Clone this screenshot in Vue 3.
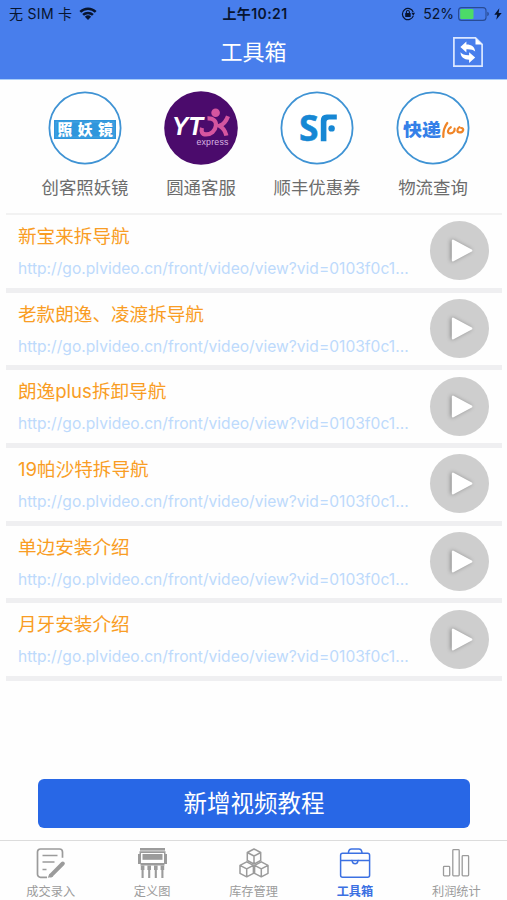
<template>
  <div class="page">
    <header class="header">
      <div class="status">
        <div class="status-left">
          <span>无 SIM 卡</span>
          <svg class="wifi" width="18" height="13" viewBox="0 0 18 13">
            <g fill="none" stroke="#07142f" stroke-width="2.5">
              <path d="M1.3 4.8a11 11 0 0 1 15.4 0" />
              <path d="M4.1 7.9a7 7 0 0 1 9.8 0" />
            </g>
            <path d="M5.9 9.8a4.5 4.5 0 0 1 6.2 0L9 12.9z" fill="#07142f" />
          </svg>
        </div>
        <div class="status-time">上午10:21</div>
        <div class="status-right">
          <svg class="lock" width="14" height="14" viewBox="0 0 14 14">
            <path d="M12.2 5a5.6 5.6 0 1 0 .1 3.9" fill="none" stroke="#07142f" stroke-width="1.2" />
            <path d="M10.4 5.8H14l-1.7 2.9z" fill="#07142f" />
            <rect x="4.2" y="6.1" width="5.5" height="4" rx=".5" fill="#07142f" />
            <path d="M5.4 6.3V5a1.5 1.5 0 0 1 3 0v1.3" fill="none" stroke="#07142f" stroke-width="1.1" />
          </svg>
          <span class="percent">52%</span>
          <svg class="battery" width="31" height="14" viewBox="0 0 31 14">
            <rect x=".6" y=".6" width="27.4" height="12.8" rx="3" fill="none" stroke="#284b94" stroke-width="1.1" />
            <rect x="2.2" y="2.1" width="13.3" height="9.8" rx="1.2" fill="#4cdb68" />
            <path d="M29.3 4.8q1.6.6 1.6 2.2t-1.6 2.2z" fill="#284b94" />
          </svg>
          <svg class="bolt" width="8" height="12" viewBox="0 0 8 12">
            <path d="M5.3.3.3 6.8h2.9l-.9 5 5.4-6.8H4.6z" fill="#07142f" />
          </svg>
        </div>
      </div>
      <div class="navbar">
        <h1>工具箱</h1>
        <svg class="refresh" width="30" height="30" viewBox="0 0 30 30">
          <path d="M.9.9h21.6L29.1 7.4v21.7H.9z" fill="none" stroke="#dce8ff" stroke-width="1.7" />
          <path d="M22.5 1.2v6.3h6.3z" fill="#fff" />
          <path d="M7.4 10.1 13.4 4.4v3.2c5.3 0 8.4 2.5 8.8 7-2-2-4.5-2.6-8.8-2.4v3.4z" fill="#fff" />
          <path d="M22.2 20.4l-6.1-5.2v3c-4.4.1-7-.8-8.6-2.9.2 4.8 3.4 7.4 8.6 7.4v3.2z" fill="#fff" />
        </svg>
      </div>
    </header>

    <section class="tools">
      <div v-for="tool in tools" :key="tool.id" class="tool">
        <svg class="logo" width="74" height="74" viewBox="0 0 74 74">
          <circle v-if="tool.id === 'yto'" cx="37" cy="37" r="36.8" fill="#4b0b6c" />
          <circle v-else cx="37" cy="37" r="35.6" fill="#fff" stroke="#3f93d4" stroke-width="1.8" />

          <g v-if="tool.id === 'mirror'">
            <rect x="6" y="29" width="62" height="19" fill="#3096dc" />
            <rect x="8" y="31" width="58" height="15" fill="none" stroke="#55afe8" stroke-width=".6" />
            <text class="cjk" x="9.4" y="43.7" font-size="14.8" font-weight="900" fill="#fff" textLength="55.5">照妖镜</text>
          </g>
          <g v-else-if="tool.id === 'yto'">
            <text class="arial" x="8" y="44" font-size="25" font-weight="700" font-style="italic" fill="#fff" textLength="31" lengthAdjust="spacingAndGlyphs">YT</text>
            <g fill="none" stroke="#d5559f" stroke-width="4.2">
              <path d="M43.5 27.4c6-.3 9 2.6 8.4 7.4-.7 5.2-4.9 8.6-9.9 8.6-3.8 0-5.2-2.6-4-6.6" />
              <path d="M64 25.2c-1.8 5-4.2 8-8.4 9.6 3 1.6 5.6 4.6 6.8 9.8" />
            </g>
            <circle cx="51.6" cy="21.8" r="4.3" fill="#d5559f" />
            <text class="arial" x="32.4" y="54.4" font-size="8.8" fill="#d9b5e2" textLength="32">express</text>
          </g>
          <g v-else-if="tool.id === 'sf'">
            <text class="latin" x="19" y="49.8" font-size="36" font-weight="700" fill="#1687d4" stroke="#1687d4" stroke-width=".5" textLength="19.5" lengthAdjust="spacingAndGlyphs">S</text>
            <path d="M40.8 50.2V29.4q0-6 6-6h10v5.2h-7.4q-3 0-3 2.8v18.8z" fill="#1687d4" />
            <circle cx="51.6" cy="37.4" r="3.2" fill="#1687d4" />
          </g>
          <g v-else>
            <text class="cjk" x="7" y="45.4" font-size="17.5" font-weight="900" fill="#3580e8" textLength="38" lengthAdjust="spacingAndGlyphs">快递</text>
            <g fill="none" stroke="#f08527" stroke-width="2.2" stroke-linecap="round">
              <path d="M51.3 32c-3 3.8-4.2 8-4 14" />
              <path d="M54.8 36.2c-3.6 2-3.8 6.2-.6 6.2 3 0 4.8-2.4 4.4-4.8" />
              <path d="M63.4 36.2c-2.6 1.8-2.8 5.2.2 5.2 3.6 0 5.2-4.2 1.6-4.4" />
            </g>
          </g>
        </svg>
        <span class="tool-name">{{ tool.name }}</span>
      </div>
    </section>

    <ul class="videos">
      <li v-for="title in videos" :key="title" class="video">
        <div class="video-text">
          <div class="video-title">{{ title }}</div>
          <div class="video-url">{{ url }}</div>
        </div>
        <button class="play" type="button">
          <svg width="59" height="59" viewBox="0 0 59 59">
            <path d="M23 19.8v19.4L41.2 29.5z" fill="#fff" stroke="#fff" stroke-width="2.4" stroke-linejoin="round" />
          </svg>
        </button>
      </li>
    </ul>

    <div class="bottom">
      <button class="add-btn" type="button">新增视频教程</button>
    </div>

    <nav class="tabs">
      <a v-for="tab in tabs" :key="tab.id" class="tab" :class="{ active: tab.id === current }" @click="current = tab.id">
        <svg width="32" height="32" viewBox="0 0 32 32" fill="none" stroke="currentColor" stroke-width="1.7">
          <g v-if="tab.id === 'entry'">
            <path d="M12 30.3H5.5A3 3 0 0 1 2.5 27.3V5a3 3 0 0 1 3-3h19a3 3 0 0 1 3 3v5.8" />
            <path d="M7.5 8.5h15M7.5 15h12M7.5 22.5h4" />
            <path d="M27.8 16.5 16 28.3" stroke-width="4" stroke-linecap="round" />
            <path d="M14.4 26.8l-1.6 4 5.5-1z" fill="currentColor" stroke="none" />
          </g>
          <g v-else-if="tab.id === 'define'">
            <g fill="currentColor" stroke="none">
              <path d="M4 1h25v2.6H4z" />
              <path d="M3.5 4.2h26V7H31v10h-2.5v1.5h-24V17H2V7h1.5zM5 6v10h23V6z" fill-rule="evenodd" />
              <rect x="6.5" y="7" width="20" height="5.8" />
            </g>
            <path d="M6.6 19v12M13.2 19v12M19.8 19v12M26.4 19v12" stroke-width="2.1" />
            <path d="M6.6 18.5v4.5M13.2 18.5v4.5M19.8 18.5v4.5M26.4 18.5v4.5" stroke-width="3.6" />
          </g>
          <g v-else-if="tab.id === 'stock'" stroke-width="1.5" stroke-linejoin="round">
            <path d="M16 2l6.7 3.5v8L16 17l-6.7-3.5v-8zM9.3 5.5 16 9l6.7-3.5M16 9v8" />
            <path d="M8.7 14.8l6.7 3.5v8l-6.7 3.5L2 26.3v-8zM2 18.3l6.7 3.5 6.7-3.5M8.7 21.8v8" />
            <path d="M23.3 14.8l6.7 3.5v8l-6.7 3.5-6.7-3.5v-8zM16.6 18.3l6.7 3.5 6.7-3.5M23.3 21.8v8" />
          </g>
          <g v-else-if="tab.id === 'tools'" stroke-width="1.5">
            <rect x="1.6" y="6.3" width="29" height="24" rx="2" />
            <path d="M9.5 6V4.8q.6-2.8 3-2.8h7.4q2.4 0 3 2.8V6M1.6 13.5h11.7M18.8 13.5h11.8" />
            <path d="M13.3 13.5h5.5v1.2q-.5 2-2.7 2t-2.8-2z" />
          </g>
          <g v-else stroke-width="1.3">
            <rect x="3.5" y="19.4" width="6.2" height="9.4" rx=".8" />
            <rect x="12.8" y="2.7" width="6.4" height="26.1" rx=".8" />
            <rect x="22.2" y="8.7" width="6.4" height="20.1" rx=".8" />
          </g>
        </svg>
        <span>{{ tab.name }}</span>
      </a>
    </nav>
  </div>
</template>

<script setup>
import { ref } from 'vue';

const current = ref('tools');

const tools = [
  { id: 'mirror', name: '创客照妖镜' },
  { id: 'yto', name: '圆通客服' },
  { id: 'sf', name: '顺丰优惠券' },
  { id: 'track', name: '物流查询' }
];

const url = 'http://go.plvideo.cn/front/video/view?vid=0103f0c1...';

const videos = [
  '新宝来拆导航',
  '老款朗逸、凌渡拆导航',
  '朗逸plus拆卸导航',
  '19帕沙特拆导航',
  '单边安装介绍',
  '月牙安装介绍'
];

const tabs = [
  { id: 'entry', name: '成交录入' },
  { id: 'define', name: '定义图' },
  { id: 'stock', name: '库存管理' },
  { id: 'tools', name: '工具箱' },
  { id: 'profit', name: '利润统计' }
];
</script>

<style>
body {
  margin: 0;
  background: #fff;
}
</style>

<style scoped>
.page {
  display: flex;
  flex-direction: column;
  height: 900px;
  overflow: hidden;
  background: #fefefe;
  font-family: Inter, "Noto Sans CJK SC", sans-serif;
}
.header {
  height: 80px;
  flex: none;
  background: #487eec;
  border-bottom: 1px solid #a9cdf8;
  box-sizing: border-box;
}
.status {
  display: grid;
  grid-template-columns: 1fr auto 1fr;
  align-items: center;
  height: 28px;
  padding: 0 5px 0 9px;
  color: #07142f;
  font-size: 14px;
  line-height: 28px;
}
.status-left,
.status-right {
  display: flex;
  align-items: center;
}
.status-left {
  letter-spacing: 0.3px;
}
.wifi {
  margin-left: 7px;
  margin-bottom: 2px;
}
.status-time {
  margin-right: 1px;
  font-size: 14px;
  font-weight: 600;
  letter-spacing: 0.4px;
}
.status-right {
  justify-content: flex-end;
}
.lock,
.battery,
.bolt {
  margin-bottom: 1px;
}
.percent {
  margin: 0 4px 0 8px;
}
.bolt {
  margin-left: 5px;
}
.navbar {
  display: grid;
  grid-template-columns: 1fr auto 1fr;
  align-items: center;
  height: 48px;
  padding-right: 24px;
  padding-left: 24px;
}
.navbar h1 {
  grid-column: 2;
  margin: 0;
  color: #fff;
  font-size: 22px;
  font-weight: 400;
  line-height: 48px;
}
.refresh {
  justify-self: end;
}
.tools {
  display: flex;
  flex: none;
  height: 133px;
  padding: 11px 16px 0 27px;
  box-sizing: border-box;
}
.tool {
  display: flex;
  flex-direction: column;
  align-items: center;
  width: 116px;
}
.logo {
  flex: none;
}
.cjk {
  font-family: "Noto Sans CJK SC", sans-serif;
}
.latin {
  font-family: "Open Sans", sans-serif;
}
.arial {
  font-family: "Liberation Sans", Arial, sans-serif;
}
.tool-name {
  margin-top: 10px;
  color: #6c6c6c;
  font-size: 17.4px;
  line-height: 26px;
}
.videos {
  flex: none;
  margin: 0 5px 0 6px;
  padding: 0;
  border-top: 2px solid #f2f2f2;
  list-style: none;
}
.video {
  display: flex;
  justify-content: space-between;
  height: 77.7px;
  padding: 7px 13px 0 12px;
  border-bottom: 5px solid #efeff1;
  box-sizing: border-box;
}
.video-title {
  color: #f99d24;
  font-size: 18.6px;
  line-height: 28px;
}
.video-url {
  margin-top: 7px;
  color: #bddafc;
  font-size: 15.6px;
  line-height: 24px;
  white-space: nowrap;
}
.play {
  flex: none;
  width: 59px;
  height: 59px;
  margin-top: -0.6px;
  padding: 0;
  border: none;
  border-radius: 50%;
  background: #cecece;
  cursor: pointer;
}
.play svg {
  display: block;
  filter: drop-shadow(-1px 0 2px rgba(0, 0, 0, 0.35));
}
.bottom {
  flex: 1;
  display: flex;
  align-items: flex-end;
  padding: 0 37px 12px 38px;
}
.add-btn {
  width: 432px;
  height: 49px;
  padding: 1px 0 0;
  border: none;
  border-radius: 6px;
  background: #2867e6;
  color: #fff;
  font-family: inherit;
  font-size: 23.5px;
  line-height: 48px;
  cursor: pointer;
}
.tabs {
  display: flex;
  flex: none;
  height: 60px;
  border-top: 1px solid #dcdcdc;
  box-sizing: border-box;
}
.tab {
  flex: 1;
  display: flex;
  flex-direction: column;
  align-items: center;
  padding-top: 6px;
  color: #9b9b9b;
  font-size: 12.2px;
  line-height: 18px;
  cursor: pointer;
}
.tab svg {
  flex: none;
  margin-bottom: 4px;
}
.tab.active {
  color: #3b70e2;
  font-weight: 600;
}
</style>
